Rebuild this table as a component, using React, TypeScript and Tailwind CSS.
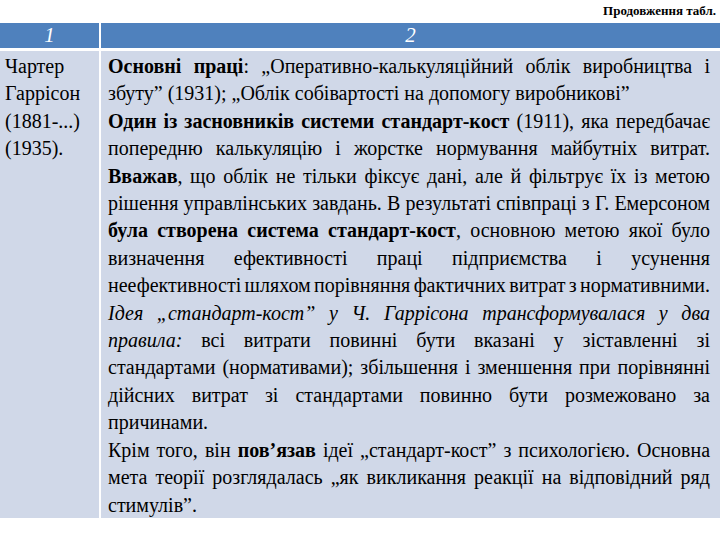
import type React from "react"

// one row of justified text, breaks kept as in the source table
function Line({ children, left, italic, tight }: { children: React.ReactNode; left?: boolean; italic?: boolean; tight?: boolean }) {
  return (
    <div
      className={
        "whitespace-nowrap font-['Liberation_Serif',serif] " +
        (left ? "text-left" : "text-justify [text-align-last:justify]") +
        (italic ? " italic" : "") +
        (tight ? " [word-spacing:-3px]" : "")
      }
    >
      {children}
    </div>
  )
}

export default function App() {
  return (
    <div className="w-[720px] h-[540px] bg-white text-black font-['Liberation_Serif',serif]">
      <div className="h-[23px] flex justify-end pr-1 pt-[3px] text-[13px] leading-[15px] font-bold font-['Liberation_Serif',serif]">
        Продовження табл.
      </div>

      <div className="grid grid-cols-[99px_1fr] gap-x-[2px] gap-y-[3px]">
        <div className="h-[25px] bg-[#4f81bd] flex items-center justify-center text-white italic text-[21px]">1</div>
        <div className="h-[25px] bg-[#4f81bd] flex items-center justify-center text-white italic text-[21px]">2</div>

        <div className="bg-[#d0d8e8] h-[467px] pl-[5px] pt-[2px] text-[20px] leading-[27.4px] font-['Liberation_Serif',serif]">
          <div>Чартер</div>
          <div>Гаррісон</div>
          <div>(1881-...)</div>
          <div>(1935).</div>
        </div>

        <div className="bg-[#d0d8e8] h-[467px] pl-[7px] pr-[10px] pt-[2px] text-[20px] leading-[27.4px] font-['Liberation_Serif',serif]">
          <Line>
            <b>Основні праці</b>: „Оперативно-калькуляційний облік виробництва і
          </Line>
          <Line left>збуту” (1931); „Облік собівартості на допомогу виробникові”</Line>
          <Line>
            <b>Один із засновників системи стандарт-кост</b> (1911), яка передбачає
          </Line>
          <Line>попередню калькуляцію і жорстке нормування майбутніх витрат.</Line>
          <Line>
            <b>Вважав</b>, що облік не тільки фіксує дані, але й фільтрує їх із метою
          </Line>
          <Line>рішення управлінських завдань. В результаті співпраці з Г. Емерсоном</Line>
          <Line>
            <b>була створена система стандарт-кост</b>, основною метою якої було
          </Line>
          <Line>визначення ефективності праці підприємства і усунення</Line>
          <Line tight>неефективності шляхом порівняння фактичних витрат з нормативними.</Line>
          <Line italic>Ідея „стандарт-кост” у Ч. Гаррісона трансформувалася у два</Line>
          <Line>
            <i>правила:</i> всі витрати повинні бути вказані у зіставленні зі
          </Line>
          <Line>стандартами (нормативами); збільшення і зменшення при порівнянні</Line>
          <Line>дійсних витрат зі стандартами повинно бути розмежовано за</Line>
          <Line left>причинами.</Line>
          <Line>
            Крім того, він <b>пов’язав</b> ідеї „стандарт-кост” з психологією. Основна
          </Line>
          <Line>мета теорії розглядалась „як викликання реакції на відповідний ряд</Line>
          <Line left>стимулів”.</Line>
        </div>
      </div>
    </div>
  )
}
